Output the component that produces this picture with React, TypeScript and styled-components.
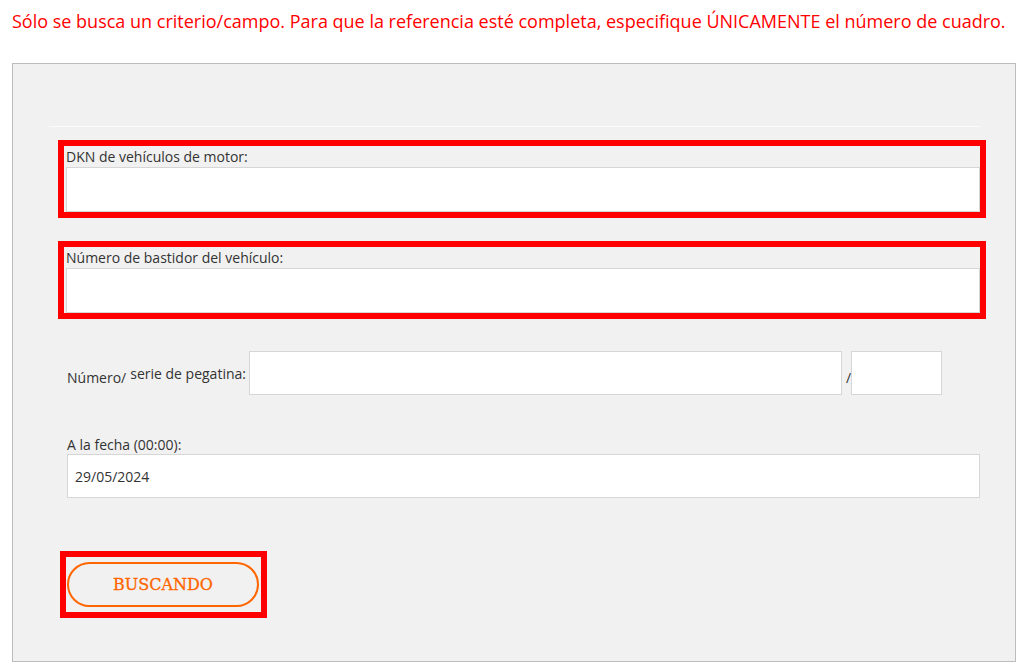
import React from "react";
import styled, { createGlobalStyle } from "styled-components";

const GlobalStyle = createGlobalStyle`
  html, body { margin: 0; padding: 0; background: #ffffff; }
  body { font-family: "Open Sans", "Liberation Sans", sans-serif; }
  * { box-sizing: border-box; }
`;

const Page = styled.div`
  padding: 9px 7px 0 12px;
  width: 1023px;
`;

const Notice = styled.p`
  margin: 0 0 30px 0;
  font-size: 18px;
  line-height: 24px;
  color: #ff0000;
  white-space: nowrap;
`;

const Panel = styled.div`
  width: 1004px;
  background: #f1f1f1;
  border: 1px solid #bdbdbd;
  padding: 62px 0 43px 0;
`;

const Separator = styled.div`
  margin-left: 36px;
  width: 931px;
  height: 1px;
  background: #fbfbfb;
`;

const Form = styled.form`
  padding-left: 45px;
  display: flex;
  flex-direction: column;
  align-items: flex-start;
`;

const HighlightGroup = styled.div<{ $top: number }>`
  margin-top: ${(p) => p.$top}px;
  width: 928px;
  border: 6px solid #ff0000;
  padding: 0 0 0 2px;
  display: flex;
  flex-direction: column;
`;

const FieldLabel = styled.label<{ $pad?: number; $gap?: number }>`
  display: block;
  font-size: 14px;
  line-height: 19px;
  color: #333333;
  padding-top: ${(p) => p.$pad ?? 0}px;
  margin-bottom: ${(p) => p.$gap ?? 0}px;
  white-space: nowrap;
`;

const TextInput = styled.input<{ $w?: number; $h?: number }>`
  display: block;
  width: ${(p) => (p.$w ? `${p.$w}px` : "100%")};
  height: ${(p) => p.$h ?? 45}px;
  border: 1px solid #d6d6d6;
  background: #ffffff;
  padding: 0 7px;
  margin: 0;
  font-family: "Open Sans", "Liberation Sans", sans-serif;
  font-size: 14px;
  color: #333333;
  outline: none;
  border-radius: 0;
  flex: none;
`;

const StickerRow = styled.div`
  margin: 32px 0 0 9px;
  display: flex;
  align-items: center;
`;

const StickerLabel = styled.div`
  width: 182px;
  flex: none;
  display: flex;
  align-items: center;
  gap: 4px;
`;

const InlineText = styled.span<{ $drop?: number }>`
  font-size: 14px;
  line-height: 19px;
  color: #333333;
  padding-top: ${(p) => p.$drop ?? 0}px;
  white-space: nowrap;
`;

const Slash = styled.span`
  width: 9px;
  flex: none;
  font-size: 14px;
  line-height: 19px;
  padding: 8px 0 0 4px;
  color: #333333;
`;

const DateBlock = styled.div`
  margin: 40px 0 0 9px;
  width: 913px;
`;

const ButtonFrame = styled.div`
  margin: 53px 0 0 2px;
  border: 6px solid #ff0000;
  padding: 5px 2px 5px 1px;
`;

const SearchButton = styled.button`
  display: block;
  width: 192px;
  height: 45px;
  border: 2px solid #ff6600;
  border-radius: 23px;
  background: transparent;
  color: #ff6600;
  font-family: "DejaVu Serif", "Liberation Serif", serif;
  font-size: 16px;
  line-height: 20px;
  -webkit-text-stroke: 0.3px #ff6600;
  cursor: pointer;
  padding: 0;
`;

export default function App() {
  return (
    <>
      <GlobalStyle />
      <Page>
        <Notice>
          Sólo se busca un criterio/campo. Para que la referencia esté completa, especifique ÚNICAMENTE el número de cuadro.
        </Notice>
        <Panel>
          <Separator />
          <Form onSubmit={(e) => e.preventDefault()}>
            <HighlightGroup $top={13}>
              <FieldLabel $pad={1} $gap={1}>DKN de vehículos de motor:</FieldLabel>
              <TextInput />
            </HighlightGroup>
            <HighlightGroup $top={23}>
              <FieldLabel $pad={1} $gap={1}>Número de bastidor del vehículo:</FieldLabel>
              <TextInput />
            </HighlightGroup>
            <StickerRow>
              <StickerLabel>
                <InlineText $drop={8}>Número/</InlineText>
                <InlineText>serie de pegatina:</InlineText>
              </StickerLabel>
              <TextInput $w={593} $h={44} />
              <Slash>/</Slash>
              <TextInput $w={91} $h={44} />
            </StickerRow>
            <DateBlock>
              <FieldLabel>A la fecha (00:00):</FieldLabel>
              <TextInput $h={44} defaultValue="29/05/2024" />
            </DateBlock>
            <ButtonFrame>
              <SearchButton type="submit">BUSCANDO</SearchButton>
            </ButtonFrame>
          </Form>
        </Panel>
      </Page>
    </>
  );
}
